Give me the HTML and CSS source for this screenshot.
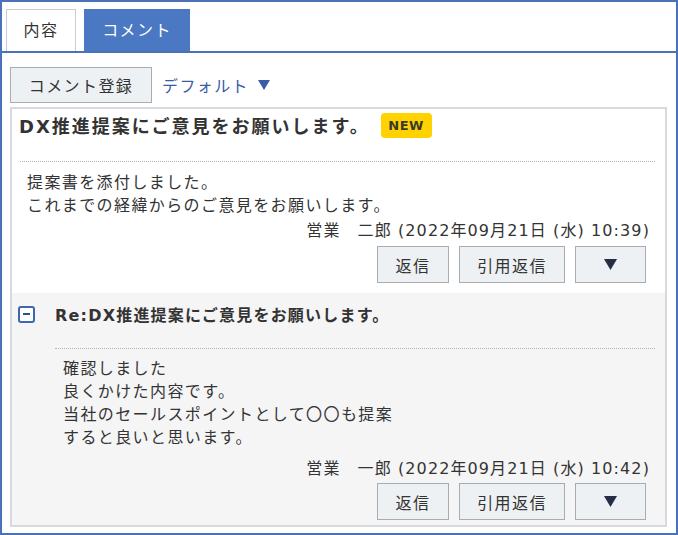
FILE: index.html
```html
<!doctype html>
<html lang="ja">
<head>
  <meta charset="UTF-8">
  <title>コメント</title>
  <link rel="stylesheet" href="styles.css">
</head>
<body>
  <div class="frame">
    <div class="tabs">
      <div class="tab">内容</div>
      <div class="tab active">コメント</div>
    </div>

    <div class="toolbar">
      <button class="btn btn-add">コメント登録</button>
      <span class="filter">デフォルト<svg class="caret" width="12" height="10" viewBox="0 0 12 10"><path d="M0 0H12L6 10Z" fill="#3a5ca8"/></svg></span>
    </div>

    <div class="thread">
      <div class="post">
        <div class="post-head">
          <span class="post-title">DX推進提案にご意見をお願いします。</span>
          <span class="badge-new">NEW</span>
        </div>
        <div class="post-body">
          <div class="text">提案書を添付しました。<br>これまでの経緯からのご意見をお願いします。</div>
          <div class="meta">営業　二郎 (2022年09月21日 (水) 10:39)</div>
          <div class="actions">
            <button class="btn btn-reply">返信</button>
            <button class="btn btn-quote">引用返信</button>
            <button class="btn btn-menu"><svg width="13" height="11" viewBox="0 0 13 11"><path d="M0 0H13L6.5 11Z" fill="#262d45"/></svg></button>
          </div>
        </div>
      </div>

      <div class="post reply">
        <div class="post-head">
          <span class="toggle"></span>
          <span class="reply-title">Re:DX推進提案にご意見をお願いします。</span>
        </div>
        <div class="post-body">
          <div class="text">確認しました<br>良くかけた内容です。<br>当社のセールスポイントとして〇〇も提案<br>すると良いと思います。</div>
          <div class="meta">営業　一郎 (2022年09月21日 (水) 10:42)</div>
          <div class="actions">
            <button class="btn btn-reply">返信</button>
            <button class="btn btn-quote">引用返信</button>
            <button class="btn btn-menu"><svg width="13" height="11" viewBox="0 0 13 11"><path d="M0 0H13L6.5 11Z" fill="#262d45"/></svg></button>
          </div>
        </div>
      </div>
    </div>
  </div>
</body>
</html>
```

FILE: styles.css
```css
* {
    box-sizing: border-box;
}
body {
    margin: 0;
    background: #fff;
    color: #333;
    font-family: "DejaVu Sans", "Noto Sans CJK JP", sans-serif;
    font-size: 16px;
    letter-spacing: 1.4px;
}
.frame {
    width: 678px;
    height: 535px;
    border: 2px solid #4a72b8;
}
.tabs {
    display: flex;
    gap: 8px;
    padding: 7px 0 0 4px;
    border-bottom: 2px solid #4a72b8;
}
.tab {
    width: 70px;
    height: 42px;
    line-height: 42px;
    text-align: center;
    border: 1px solid #c9cdd2;
    border-bottom: none;
    background: #fff;
}
.tab.active {
    width: 106px;
    background: #4a78c2;
    border-color: #4a78c2;
    color: #fff;
}
.toolbar {
    display: flex;
    align-items: center;
    margin: 14px 0 4px 8px;
}
.btn {
    height: 37px;
    padding: 0;
    border: 1px solid #a9adb2;
    background: #eef1f4;
    color: #333;
    font: inherit;
    letter-spacing: inherit;
}
.btn-add {
    width: 142px;
    height: 36px;
}
.filter {
    display: flex;
    align-items: center;
    margin-left: 10px;
    color: #3a5ca8;
}
.caret {
    margin-left: 9px;
}
.thread {
    margin: 0 9px 0 8px;
    border: 2px solid #d6dade;
}
.post {
    padding: 3px 0 10px;
}
.post-head {
    display: flex;
    align-items: center;
    height: 26px;
    padding-left: 7px;
}
.post-title {
    font-size: 18px;
    font-weight: bold;
    letter-spacing: 2px;
}
.badge-new {
    margin-left: 11px;
    width: 51px;
    height: 25px;
    line-height: 25px;
    border-radius: 4px;
    background: #ffd200;
    color: #3a3a2a;
    text-align: center;
    font-size: 13px;
    font-weight: bold;
    letter-spacing: 0.5px;
}
.post-body {
    margin: 23px 10px 0 8px;
    padding: 9px 0 0 7px;
    border-top: 1px dotted #b4b4b4;
}
.text {
    line-height: 23px;
}
.meta {
    margin-top: 2px;
    padding-right: 5px;
    line-height: 23px;
    text-align: right;
    letter-spacing: 1.1px;
}
.actions {
    display: flex;
    justify-content: flex-end;
    gap: 10px;
    margin-top: 4px;
    padding-right: 9px;
}
.btn-reply {
    width: 72px;
}
.btn-quote {
    width: 106px;
}
.btn-menu {
    width: 71px;
    display: flex;
    align-items: center;
    justify-content: center;
}
.reply {
    background: #f5f5f5;
    padding: 8px 0 5px;
}
.reply .post-head {
    padding-left: 6px;
}
.toggle {
    display: flex;
    align-items: center;
    justify-content: center;
    width: 17px;
    height: 17px;
    margin-right: 20px;
    border: 2px solid #3d68b0;
    border-radius: 3px;
    background: #fff;
}
.toggle:before {
    content: "";
    width: 7px;
    height: 2px;
    background: #2f4f8f;
}
.reply-title {
    font-weight: bold;
    letter-spacing: 1.2px;
}
.reply .post-body {
    margin: 21px 10px 0 43px;
    padding: 8px 0 0 8px;
}
.reply .meta {
    margin-top: 8px;
}
.reply .actions {
    margin-top: 3px;
}
```
